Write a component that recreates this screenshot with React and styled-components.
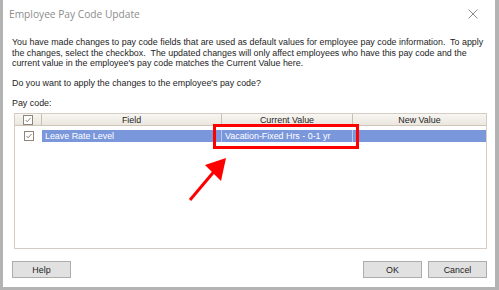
import React from 'react';
import styled, { createGlobalStyle } from 'styled-components';

const Global = createGlobalStyle`
  html, body {
    margin: 0;
    padding: 0;
    background: #ffffff;
  }
  * {
    box-sizing: border-box;
  }
`;

const Frame = styled.div`
  position: relative;
  width: 499px;
  height: 290px;
  background: #ffffff;
  border-left: 3px solid #b3b3b3;
  border-right: 4px solid #b3b3b3;
  border-bottom: 3px solid #b3b3b3;
  display: flex;
  flex-direction: column;
  overflow: hidden;
`;

const TitleBar = styled.div`
  flex-shrink: 0;
  height: 28px;
  display: flex;
  align-items: center;
  justify-content: space-between;
  padding: 0 17px 0 6px;
`;

const Title = styled.span`
  font-family: 'Open Sans', 'Noto Sans', sans-serif;
  font-size: 10.2px;
  color: #8c8c8c;
`;

const Close = styled.svg`
  width: 10px;
  height: 10px;
  margin-top: -1px;
`;

const Body = styled.div`
  flex-shrink: 0;
  display: flex;
  flex-direction: column;
  padding: 9px 8px 0 9px;
`;

const Para = styled.p`
  margin: 0;
  white-space: nowrap;
  font-family: 'Liberation Sans', Arial, sans-serif;
  font-size: 8.9px;
  line-height: 10.5px;
  color: #1e1e1e;
  margin-bottom: ${(p) => p.gap || 0}px;
`;

const Table = styled.div`
  position: relative;
  margin: 5px 0 0 2px;
  height: 136px;
  border: 1px solid #d6ccc4;
  display: flex;
  flex-direction: column;
`;

const Row = styled.div`
  display: grid;
  grid-template-columns: 27px 180px 131px 1fr;
  height: ${(p) => p.h}px;
  margin-bottom: ${(p) => p.gap || 0}px;
`;

const HeadCell = styled.div`
  display: flex;
  align-items: center;
  justify-content: center;
  border-right: 1px solid #c9c0b4;
  border-bottom: 1px solid #cfc5b9;
  background: linear-gradient(#f8f6f2, #ebe7df);
  font-family: 'Liberation Sans', Arial, sans-serif;
  font-size: 8.9px;
  color: #1e1e1e;
  &:last-child {
    border-right: none;
  }
`;

const Cell = styled.div`
  display: flex;
  align-items: center;
  padding-left: ${(p) => (p.$box ? 0 : 3)}px;
  justify-content: ${(p) => (p.$box ? 'center' : 'flex-start')};
  background: ${(p) => (p.$box ? '#ffffff' : '#7b97dc')};
  border-right: ${(p) => (p.$sep ? '1px solid #b9c8ee' : 'none')};
  font-family: 'Liberation Sans', Arial, sans-serif;
  font-size: 8.9px;
  color: #ffffff;
`;

const Check = styled.span`
  width: 10px;
  height: 10px;
  border: 1px solid #8f8579;
  background: #ffffff;
  display: flex;
  align-items: center;
  justify-content: center;
`;

const Highlight = styled.div`
  position: absolute;
  left: 198px;
  top: 10px;
  width: 146px;
  height: 25px;
  border: 3px solid #ff0000;
`;

const Arrow = styled.svg`
  position: absolute;
  left: 180px;
  top: 150px;
`;

const Footer = styled.div`
  flex-shrink: 0;
  display: flex;
  align-items: flex-start;
  padding: 12px 8px 0 9px;
  gap: 6px;
`;

const Spacer = styled.div`
  flex: 1;
`;

const Button = styled.button`
  width: 59px;
  height: 17px;
  padding: 0;
  border: 1px solid #adadad;
  background: #e1e1e1;
  font-family: 'Liberation Sans', Arial, sans-serif;
  font-size: 8.9px;
  color: #1e1e1e;
`;

const CheckMark = () => (
  <Check>
    <svg width="8" height="8" viewBox="0 0 8 8">
      <path d="M1.5 4 L3.2 5.8 L6.5 2" fill="none" stroke="#8f8579" strokeWidth="1" />
    </svg>
  </Check>
);

export default function App() {
  return (
    <>
      <Global />
      <Frame>
        <TitleBar>
          <Title>Employee Pay Code Update</Title>
          <Close viewBox="0 0 10 10">
            <path d="M0.5 0.5 L9.5 9.5 M9.5 0.5 L0.5 9.5" stroke="#8c8c8c" strokeWidth="1" />
          </Close>
        </TitleBar>
        <Body>
          <Para>
            You have made changes to pay code fields that are used as default values for employee pay code information.&nbsp; To apply
          </Para>
          <Para>
            the changes, select the checkbox.&nbsp; The updated changes will only affect employees who have this pay code and the
          </Para>
          <Para gap={9}>current value in the employee's pay code matches the Current Value here.</Para>
          <Para gap={9.5}>Do you want to apply the changes to the employee's pay code?</Para>
          <Para>Pay code:</Para>
          <Table>
            <Row h={12} gap={4}>
              <HeadCell>
                <CheckMark />
              </HeadCell>
              <HeadCell>Field</HeadCell>
              <HeadCell>Current Value</HeadCell>
              <HeadCell>New Value</HeadCell>
            </Row>
            <Row h={12}>
              <Cell $box>
                <CheckMark />
              </Cell>
              <Cell $sep>Leave Rate Level</Cell>
              <Cell $sep>Vacation-Fixed Hrs - 0-1 yr</Cell>
              <Cell />
            </Row>
            <Highlight />
          </Table>
        </Body>
        <Footer>
          <Button>Help</Button>
          <Spacer />
          <Button>OK</Button>
          <Button>Cancel</Button>
        </Footer>
        <Arrow width="50" height="55" viewBox="0 0 50 55">
          <path d="M7 50 L34 18" stroke="#ff0000" strokeWidth="3" />
          <polygon points="43,8 22,15 38,31" fill="#ff0000" />
        </Arrow>
      </Frame>
    </>
  );
}
